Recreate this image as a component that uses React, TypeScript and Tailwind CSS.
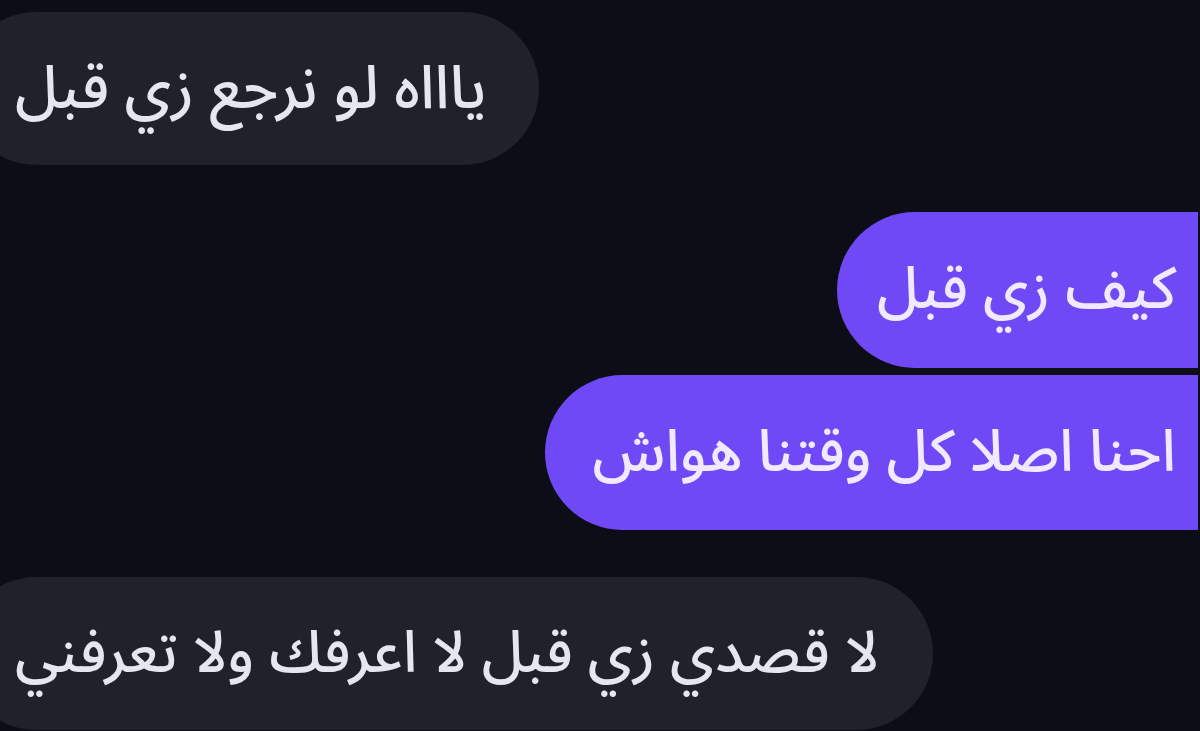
export default function App() {
  const font = "font-['Noto_Sans_Arabic','DejaVu_Sans',sans-serif]"
  return (
    <div className={`w-[1200px] h-[731px] overflow-hidden bg-[#0c0d16] flex flex-col ${font}`}>
      {/* incoming */}
      <div className="self-start mt-[12px] ml-[-40px] h-[153px] rounded-full bg-[#202129] flex items-center pl-[55px] pr-[53px]">
        <p dir="rtl" className="text-[60px] leading-none font-medium text-[#e6e6ee] whitespace-nowrap">ياااه لو نرجع زي قبل</p>
      </div>

      {/* outgoing */}
      <div className="self-end mt-[47px] mr-[2px] h-[156px] rounded-l-full rounded-r-[30px] bg-[#7049f6] flex items-center justify-end pl-[40px] pr-[22px]">
        <p dir="rtl" className="text-[58px] leading-none font-medium text-[#f1e9ff] whitespace-nowrap">كيف زي قبل</p>
      </div>
      <div className="self-end mt-[7px] mr-[2px] h-[155px] rounded-l-full rounded-r-[30px] bg-[#7049f6] flex items-center justify-end pl-[48px] pr-[22px]">
        <p dir="rtl" className="text-[58px] leading-none font-medium text-[#f1e9ff] whitespace-nowrap">احنا اصلا كل وقتنا هواش</p>
      </div>

      {/* incoming */}
      <div className="self-start mt-[47px] ml-[-40px] h-[153px] rounded-full bg-[#202129] flex items-center pl-[55px] pr-[54px]">
        <p dir="rtl" className="text-[58px] leading-none font-medium text-[#e6e6ee] whitespace-nowrap">لا قصدي زي قبل لا اعرفك ولا تعرفني</p>
      </div>
    </div>
  )
}
